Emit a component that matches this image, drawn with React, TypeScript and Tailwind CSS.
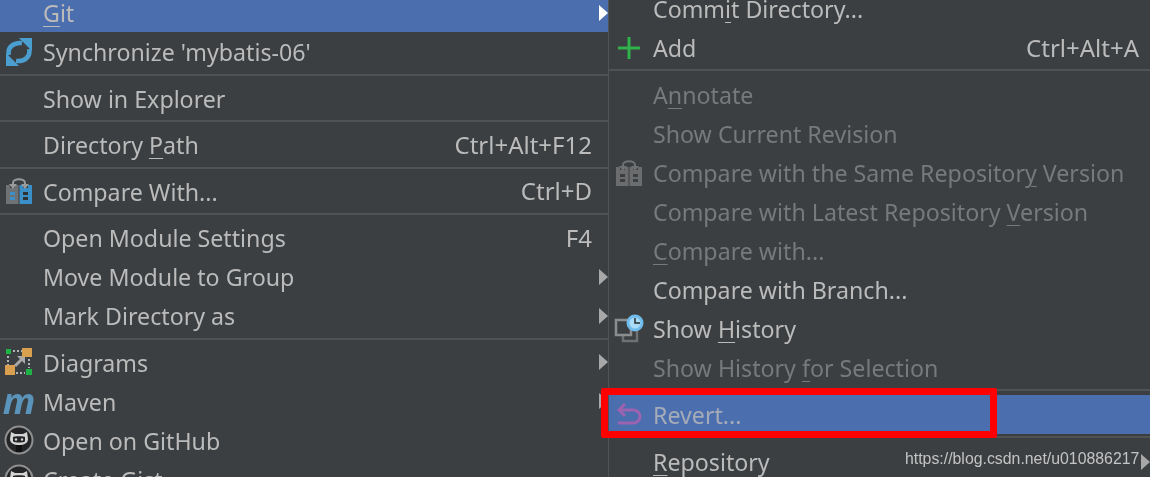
import type { ReactNode } from 'react';

type Item = {
  label: ReactNode;
  icon?: ReactNode;
  shortcut?: string;
  arrow?: boolean;
  disabled?: boolean;
  active?: boolean;
};

function U({ children }: { children: ReactNode }) {
  return <span className="underline decoration-1 underline-offset-[4px]">{children}</span>;
}

function SyncIcon() {
  return (
    <svg width="28" height="28" viewBox="0 0 28 28" fill="none">
      <path d="M4 17C2 10 8 4 17 5" stroke="#4a9fd0" strokeWidth="4.5" />
      <path d="M24 11C26 18 20 24 11 23" stroke="#4a9fd0" strokeWidth="4.5" />
      <path d="M14 0H27V13Z" fill="#4a9fd0" />
      <path d="M1 15V28H14Z" fill="#4a9fd0" />
    </svg>
  );
}

function CompareIcon({ muted }: { muted?: boolean }) {
  const left = muted ? '#6a6c6e' : '#6f7274';
  const right = muted ? '#6a6c6e' : '#3a8fc9';
  const arch = muted ? '#6f7173' : '#9a9a9a';
  const leftDash = muted ? '#3c3f41' : '#3a8fc9';
  const rightDash = muted ? '#3c3f41' : '#2f3133';
  return (
    <svg width="28" height="28" viewBox="0 0 28 28" fill="none">
      <path d="M1 8H5V11H10V8H13.5V27H1Z" fill={left} />
      <path d="M14.5 8H18V11H23V8H27V27H14.5Z" fill={right} />
      <path d="M8 9V6C8 1 20 1 20 6V9" stroke={arch} strokeWidth="2" />
      <path d="M4 7H12L8 12ZM16 7H24L20 12Z" fill={arch} />
      <path d="M5 15H10V18H5ZM5 20H10V23H5Z" fill={leftDash} />
      <path d="M18 15H23V18H18ZM18 20H23V23H18Z" fill={rightDash} />
    </svg>
  );
}

function DiagramIcon() {
  return (
    <svg width="28" height="28" viewBox="0 0 28 28" fill="none">
      <path d="M8 3H17M24 11V20M3 8V17M11 25H20" stroke="#b4b4b4" strokeWidth="2" strokeDasharray="2 2" />
      <path d="M10 18L18 10" stroke="#a8a8a8" strokeWidth="3" />
      <path d="M12 8H20V16Z" fill="#a8a8a8" />
      <path d="M1 1H6V6H1ZM21 21H27V27H21Z" fill="#1fb345" />
      <path d="M17 0H27V9H17ZM0 17H10V27H0Z" fill="#d9a050" />
    </svg>
  );
}

function GithubIcon() {
  return (
    <svg width="30" height="30" viewBox="0 0 30 30" fill="none">
      <circle cx="15" cy="15" r="13.5" fill="#242526" stroke="#8f8f8f" strokeWidth="2" />
      <path d="M7 7L11 9H19L23 7L24 14C24 18 20 20 15 20C10 20 6 18 6 14Z" fill="#d4d4d4" />
      <path d="M9 12C9 11 21 11 21 12V16C21 18 9 18 9 16Z" fill="#242526" />
      <circle cx="12" cy="14.5" r="1.2" fill="#d4d4d4" />
      <circle cx="18" cy="14.5" r="1.2" fill="#d4d4d4" />
      <path d="M12 20H18V27H12Z" fill="#111111" />
    </svg>
  );
}

function HistoryIcon() {
  return (
    <svg width="30" height="30" viewBox="0 0 30 30" fill="none">
      <path d="M9 13H23V27H9Z" stroke="#6e7072" strokeWidth="2.5" />
      <path d="M2 6H17V21H2Z" fill="#3c3f41" stroke="#8a8c8e" strokeWidth="2.5" />
      <circle cx="21" cy="9" r="8.5" fill="#6fbcec" />
      <circle cx="21" cy="9" r="5.5" fill="#a9dcf8" />
      <path d="M21 4V9H26" stroke="#25282a" strokeWidth="1.5" />
    </svg>
  );
}

function RevertIcon() {
  return (
    <svg width="26" height="26" viewBox="0 0 26 26" fill="none">
      <path d="M3 8H17C21 8 24 11 24 14.5C24 18 21 21 17 21H2" stroke="#9b63b0" strokeWidth="3" />
      <path d="M9 2L3 8L9 14" stroke="#9b63b0" strokeWidth="3" />
    </svg>
  );
}

const leftMenu: (Item | 'sep')[] = [
  { label: <><U>G</U>it</>, arrow: true, active: true },
  { label: "Synchronize 'mybatis-06'", icon: <SyncIcon /> },
  'sep',
  { label: 'Show in Explorer' },
  'sep',
  { label: <>Directory <U>P</U>ath</>, shortcut: 'Ctrl+Alt+F12' },
  'sep',
  { label: 'Compare With...', icon: <CompareIcon />, shortcut: 'Ctrl+D' },
  'sep',
  { label: 'Open Module Settings', shortcut: 'F4' },
  { label: 'Move Module to Group', arrow: true },
  { label: 'Mark Directory as', arrow: true },
  'sep',
  { label: 'Diagrams', icon: <DiagramIcon />, arrow: true },
  { label: 'Maven', icon: <span className="text-[36px] leading-none font-bold italic text-[#5a94bb]">m</span>, arrow: true },
  { label: 'Open on GitHub', icon: <GithubIcon /> },
  { label: 'Create Gist...', icon: <GithubIcon /> },
];

const rightMenu: (Item | 'sep')[] = [
  { label: <>Comm<U>i</U>t Directory...</> },
  {
    label: 'Add',
    icon: (
      <svg width="22" height="22" viewBox="0 0 22 22">
        <path d="M0 11H22M11 0V22" stroke="#2fb24c" strokeWidth="3" />
      </svg>
    ),
    shortcut: 'Ctrl+Alt+A',
  },
  'sep',
  { label: <>A<U>n</U>notate</>, disabled: true },
  { label: 'Show Current Revision', disabled: true },
  { label: <>Compare with the Same Repositor<U>y</U> Version</>, icon: <CompareIcon muted />, disabled: true },
  { label: <>Compare with Latest Repository <U>V</U>ersion</>, disabled: true },
  { label: <><U>C</U>ompare with...</>, disabled: true },
  { label: 'Compare with Branch...' },
  { label: <>Show <U>H</U>istory</>, icon: <HistoryIcon /> },
  { label: <>Show History <U>f</U>or Selection</>, disabled: true },
  'sep',
  { label: 'Revert...', icon: <RevertIcon />, active: true },
  'sep',
  { label: <><U>R</U>epository</>, arrow: true },
];

function Menu({
  items,
  sepClass,
  iconClass,
  endClass,
}: {
  items: (Item | 'sep')[];
  sepClass: string;
  iconClass: string;
  endClass: string;
}) {
  return (
    <div className="flex flex-col">
      {items.map((item, i) =>
        item === 'sep' ? (
          <div key={i} className={sepClass}>
            <div className="h-[2px] bg-[#505254]" />
          </div>
        ) : (
          <div
            key={i}
            className={`flex h-[39px] shrink-0 items-center ${item.active ? 'bg-[#4b6eaf]' : ''} ${
              item.disabled ? 'text-[#77797b]' : item.active && !item.arrow ? 'text-[#a5abb8]' : 'text-[#bbbbbb]'
            }`}
          >
            <span className={`flex shrink-0 items-center justify-center ${iconClass}`}>{item.icon}</span>
            <span className="flex-1 whitespace-nowrap pt-[2px]">{item.label}</span>
            {item.shortcut && <span className="whitespace-nowrap text-[24px]">{item.shortcut}</span>}
            <span className={`flex shrink-0 justify-end ${endClass}`}>
              {item.arrow && (
                <svg width="9" height="16" viewBox="0 0 9 16" className="shrink-0">
                  <path d="M0 0L9 8L0 16Z" fill={item.active ? '#ffffff' : '#a8a8a8'} />
                </svg>
              )}
            </span>
          </div>
        ),
      )}
    </div>
  );
}

export default function App() {
  return (
    <div className="relative flex h-[477px] w-[1150px] overflow-hidden bg-[#3c3f41] font-['Noto_Sans',sans-serif] text-[23.2px] blur-[0.5px]">
      {/* Project tree context menu */}
      <div className="w-[608px] shrink-0 -mt-[7px]">
        <Menu items={leftMenu} sepClass="h-[7.5px] pt-[2.5px]" iconClass="w-[43px] pr-[5px]" endClass="w-4" />
      </div>
      <div className="w-px shrink-0 bg-[#505254]" />
      {/* Git submenu */}
      <div className="min-w-0 flex-1 -mt-[11px]">
        <Menu items={rightMenu} sepClass="h-2 pt-[2px]" iconClass="w-[44px] pr-1" endClass="w-[11px]" />
      </div>
      {/* Red annotation box */}
      <div className="absolute top-[388px] left-[601px] h-[50px] w-[396px] rounded-[2px] border-[7px] border-[#ff0000]" />
      {/* Watermark */}
      <div className="absolute top-[449px] left-[905px] font-['Liberation_Sans',sans-serif] text-[15.85px] leading-[20px] text-[#c4c4c4]">
        https://blog.csdn.net/u010886217
      </div>
    </div>
  );
}
